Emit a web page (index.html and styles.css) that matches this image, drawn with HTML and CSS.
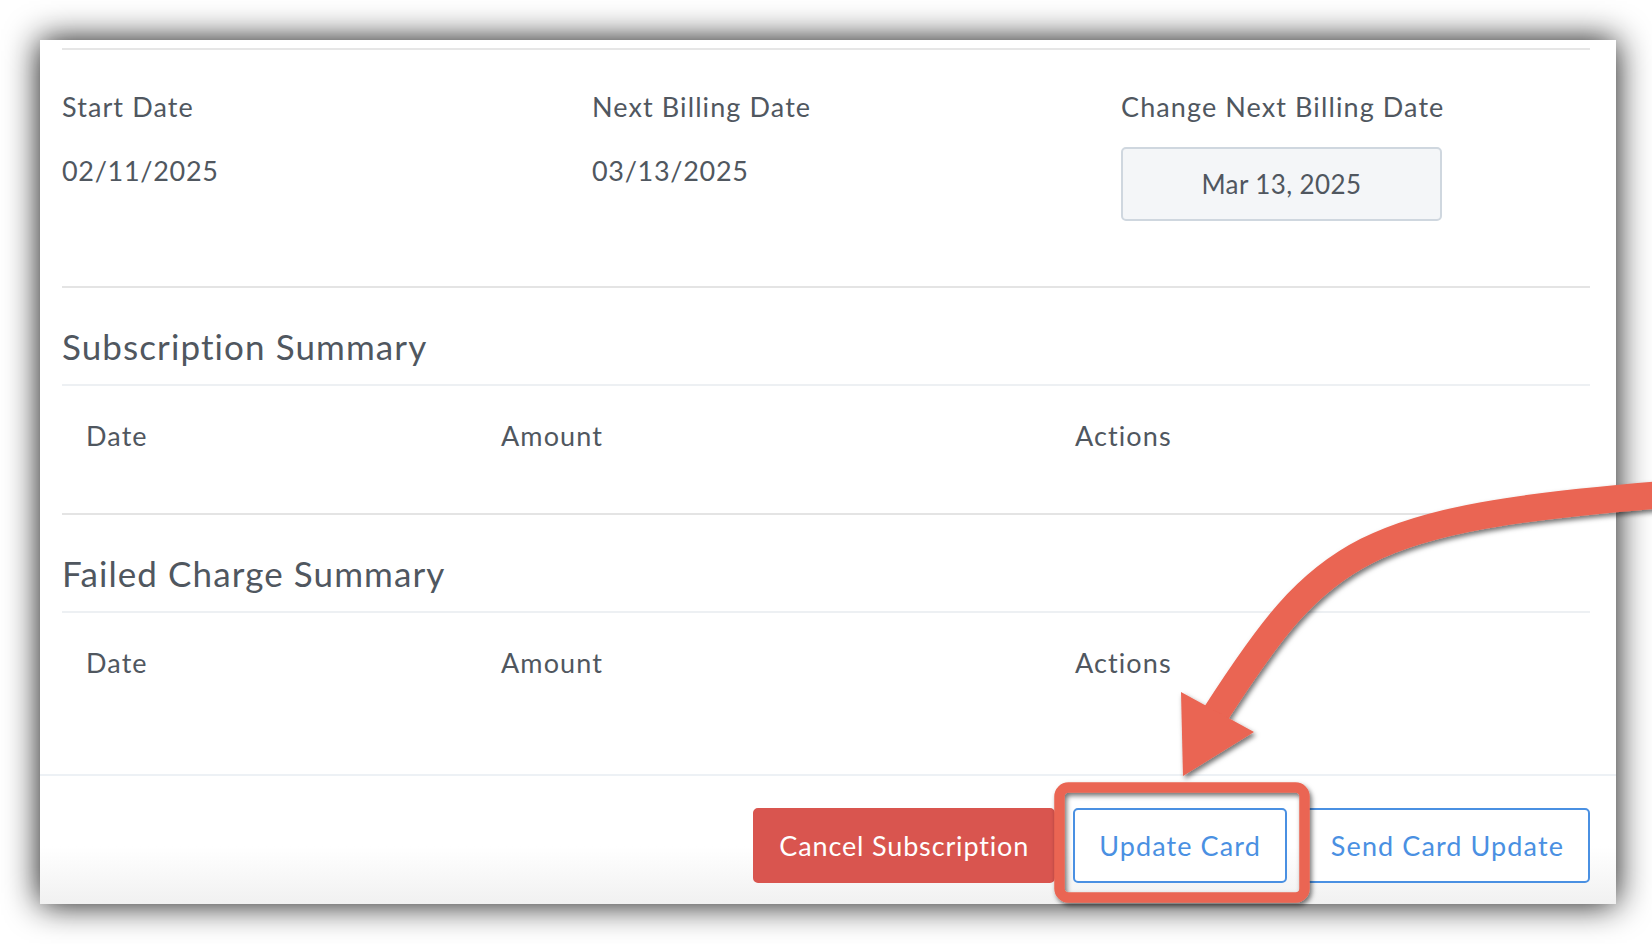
FILE: index.html
```html
<!DOCTYPE html>
<html lang="en">
<head>
<meta charset="utf-8">
<title>Subscription</title>
<link rel="stylesheet" href="styles.css">
</head>
<body>
<div class="page">
  <div class="card">
    <div class="card-body">
      <div class="details">
        <div class="field">
          <div class="label">Start Date</div>
          <div class="value">02/11/2025</div>
        </div>
        <div class="field">
          <div class="label">Next Billing Date</div>
          <div class="value">03/13/2025</div>
        </div>
        <div class="field">
          <div class="label">Change Next Billing Date</div>
          <div class="date-input">Mar 13, 2025</div>
        </div>
      </div>
      <section class="summary">
        <h2 class="summary-title">Subscription Summary</h2>
        <div class="table-head">
          <div class="th">Date</div>
          <div class="th">Amount</div>
          <div class="th">Actions</div>
        </div>
      </section>
      <section class="summary summary-last">
        <h2 class="summary-title">Failed Charge Summary</h2>
        <div class="table-head">
          <div class="th">Date</div>
          <div class="th">Amount</div>
          <div class="th">Actions</div>
        </div>
      </section>
    </div>
    <div class="card-footer">
      <button class="btn btn-danger">Cancel Subscription</button>
      <button class="btn btn-outline">Update Card</button>
      <button class="btn btn-outline">Send Card Update</button>
    </div>
  </div>
  <svg class="annotation" width="1652" height="944" viewBox="0 0 1652 944">
    <defs>
      <filter id="shadow" x="-20%" y="-20%" width="140%" height="140%">
        <feDropShadow dx="2" dy="3" stdDeviation="2.5" flood-color="#000" flood-opacity="0.55"/>
      </filter>
    </defs>
    <g filter="url(#shadow)">
      <path d="M1670 494 C1360 519 1323 547 1215 715" fill="none" stroke="#ea6552" stroke-width="27"/>
      <polygon points="1181,692 1254,732 1183,776" fill="#ea6552"/>
    </g>
    <rect x="1059.5" y="787.5" width="245" height="110" rx="9" fill="none" stroke="#ea6552" stroke-width="10.5" filter="url(#shadow)"/>
  </svg>
</div>
</body>
</html>
```

FILE: styles.css
```css
html, body {
  margin: 0;
  padding: 0;
  background: #ffffff;
}

body {
  width: 1652px;
  height: 944px;
  overflow: hidden;
  font-family: Lato, "Liberation Sans", sans-serif;
  color: #50575f;
}

.page {
  position: relative;
  width: 1652px;
  height: 944px;
  padding: 40px 36px 0 40px;
  box-sizing: border-box;
}

.card {
  width: 1576px;
  height: 864px;
  background: #ffffff;
  box-shadow: 0 0 32px rgba(0, 0, 0, 0.95);
  display: flex;
  flex-direction: column;
}

.card-body {
  flex: 1;
  padding: 8px 26px 0 22px;
}

.details {
  box-sizing: border-box;
  height: 240px;
  padding-top: 42px;
  border-top: 2px solid #e6e6e6;
  border-bottom: 2px solid #e4e4e4;
  display: grid;
  grid-template-columns: 530px 529px 1fr;
}

.label,
.value,
.th {
  font-size: 27px;
  line-height: 30px;
  letter-spacing: 1.1px;
}

.label-narrow {
  letter-spacing: 0.8px;
}

.value {
  margin-top: 34px;
  letter-spacing: 0.7px;
}

.date-input {
  box-sizing: border-box;
  margin-top: 25px;
  width: 321px;
  height: 74px;
  background: #f4f6f8;
  border: 2px solid #cfd7df;
  border-radius: 5px;
  display: flex;
  align-items: center;
  justify-content: center;
  font-size: 26px;
  letter-spacing: 0.4px;
}

.summary {
  padding-top: 38px;
  padding-bottom: 62px;
  border-bottom: 2px solid #e4e4e4;
}

.summary-last {
  border-bottom: none;
}

.summary-title {
  margin: 0;
  padding-bottom: 18px;
  border-bottom: 2px solid #edf0f3;
  font-size: 35px;
  line-height: 40px;
  font-weight: 400;
  letter-spacing: 1.1px;
}

.table-head {
  padding-top: 35px;
  display: grid;
  grid-template-columns: 415px 574px 1fr;
}

.th {
  padding-left: 24px;
}

.card-footer {
  box-sizing: border-box;
  height: 130px;
  padding: 32px 26px 0 0;
  border-top: 2px solid #edf1f5;
  background: linear-gradient(to bottom, #ffffff 0%, #ffffff 55%, #f1f1f1 100%);
  display: flex;
  justify-content: flex-end;
  align-items: flex-start;
  gap: 18px;
}

.btn {
  box-sizing: border-box;
  height: 75px;
  padding: 0 24px;
  border-radius: 5px;
  font-family: Lato, "Liberation Sans", sans-serif;
  font-size: 27px;
  letter-spacing: 1.1px;
  cursor: pointer;
}

.btn-danger {
  background: #d9554f;
  border: 2px solid #d9554f;
  color: #ffffff;
  letter-spacing: 0.85px;
}

.btn-outline {
  background: #ffffff;
  border: 2px solid #4a90e2;
  color: #4a90e2;
}

.annotation {
  position: absolute;
  top: 0;
  left: 0;
  pointer-events: none;
}
```
